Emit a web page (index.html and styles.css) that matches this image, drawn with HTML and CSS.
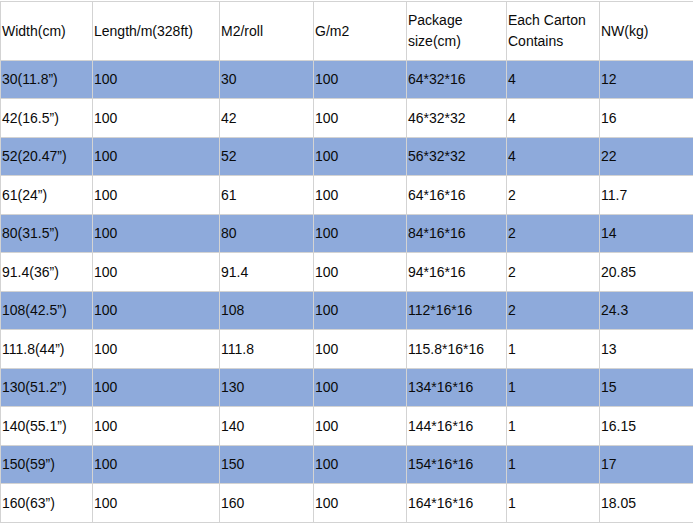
FILE: index.html
```html
<!DOCTYPE html>
<html>
<head>
<meta charset="utf-8">
<link rel="stylesheet" href="styles.css">
</head>
<body>
<div class="wrap">
<table class="spec">
<colgroup>
<col class="c1"><col class="c2"><col class="c3"><col class="c4"><col class="c5"><col class="c6"><col class="c7">
</colgroup>
<thead>
<tr class="head"><td>Width(cm)</td><td>Length/m(328ft)</td><td>M2/roll</td><td>G/m2</td><td>Package<br>size(cm)</td><td>Each Carton<br>Contains</td><td>NW(kg)</td></tr>
</thead>
<tbody>
<tr class="blue a"><td>30(11.8”)</td><td>100</td><td>30</td><td>100</td><td>64*32*16</td><td>4</td><td>12</td></tr>
<tr class="b"><td>42(16.5”)</td><td>100</td><td>42</td><td>100</td><td>46*32*32</td><td>4</td><td>16</td></tr>
<tr class="blue a"><td>52(20.47”)</td><td>100</td><td>52</td><td>100</td><td>56*32*32</td><td>4</td><td>22</td></tr>
<tr class="b"><td>61(24”)</td><td>100</td><td>61</td><td>100</td><td>64*16*16</td><td>2</td><td>11.7</td></tr>
<tr class="blue a"><td>80(31.5”)</td><td>100</td><td>80</td><td>100</td><td>84*16*16</td><td>2</td><td>14</td></tr>
<tr class="b"><td>91.4(36”)</td><td>100</td><td>91.4</td><td>100</td><td>94*16*16</td><td>2</td><td>20.85</td></tr>
<tr class="blue a"><td>108(42.5”)</td><td>100</td><td>108</td><td>100</td><td>112*16*16</td><td>2</td><td>24.3</td></tr>
<tr class="b"><td>111.8(44”)</td><td>100</td><td>111.8</td><td>100</td><td>115.8*16*16</td><td>1</td><td>13</td></tr>
<tr class="blue a"><td>130(51.2”)</td><td>100</td><td>130</td><td>100</td><td>134*16*16</td><td>1</td><td>15</td></tr>
<tr class="b"><td>140(55.1”)</td><td>100</td><td>140</td><td>100</td><td>144*16*16</td><td>1</td><td>16.15</td></tr>
<tr class="blue a"><td>150(59”)</td><td>100</td><td>150</td><td>100</td><td>154*16*16</td><td>1</td><td>17</td></tr>
<tr class="b"><td>160(63”)</td><td>100</td><td>160</td><td>100</td><td>164*16*16</td><td>1</td><td>18.05</td></tr>
</tbody>
</table>
</div>
</body>
</html>
```
FILE: styles.css
```css
html, body {
  margin: 0;
  padding: 0;
  background: #ffffff;
  overflow: hidden;
}
.wrap {
  width: 693px;
  height: 525px;
  overflow: hidden;
  padding-top: 1px;
  box-sizing: border-box;
}
.spec {
  border-collapse: collapse;
  table-layout: fixed;
  width: 720px;
  font-family: "Liberation Sans", Arial, sans-serif;
  font-size: 14px;
  color: #0a0a0a;
}
.c1 { width: 92px; }
.c2 { width: 127px; }
.c3 { width: 94px; }
.c4 { width: 93px; }
.c5 { width: 100px; }
.c6 { width: 93px; }
.c7 { width: 121px; }
.spec td {
  border: 1px solid #d3d3d3;
  padding: 0 2px 0 1px;
  vertical-align: middle;
  line-height: 21px;
  white-space: nowrap;
  overflow: hidden;
}
.head td { height: 58px; }
.a td { height: 37px; }
.b td { height: 38px; }
.blue td { background: #8eaadb; }
```
